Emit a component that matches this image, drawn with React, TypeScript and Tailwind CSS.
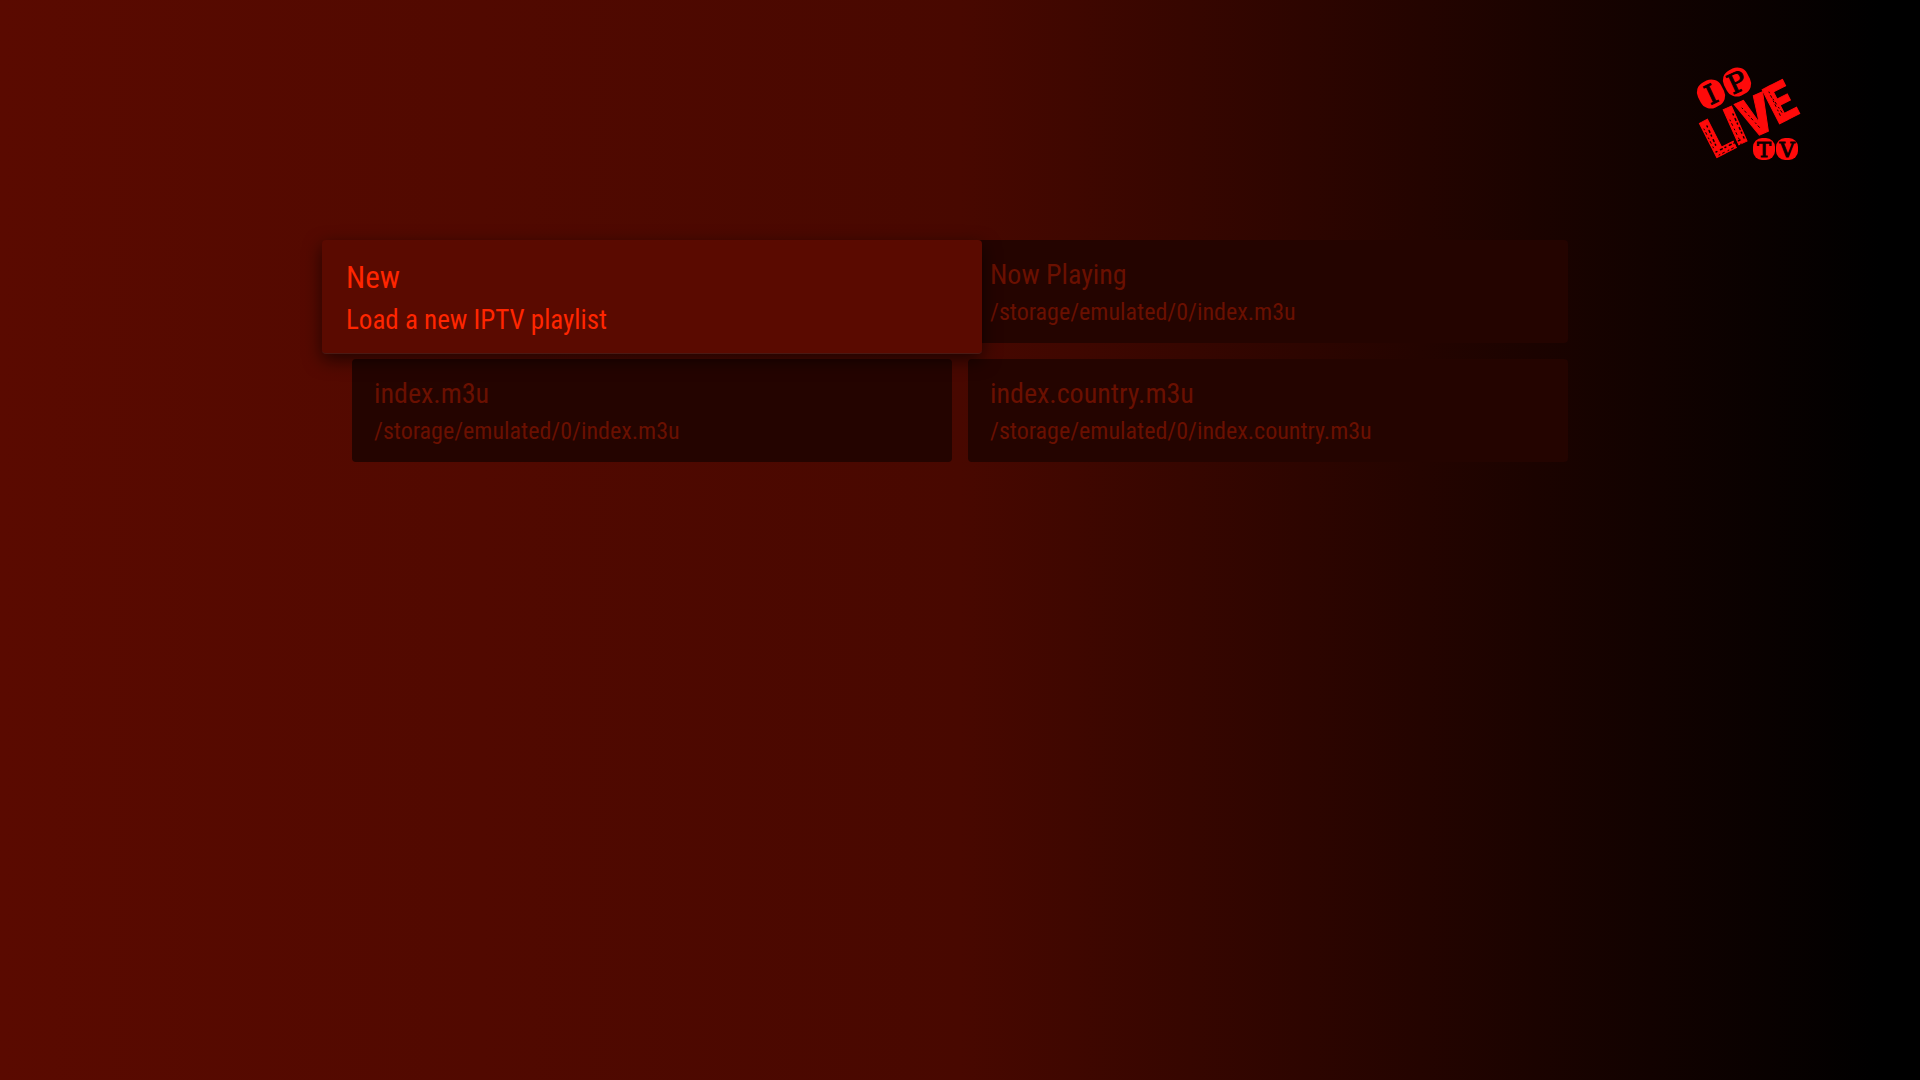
import React from "react";

type Playlist = { title: string; detail: string };

const playlists: Playlist[] = [
  { title: "Now Playing", detail: "/storage/emulated/0/index.m3u" },
  { title: "index.m3u", detail: "/storage/emulated/0/index.m3u" },
  { title: "index.country.m3u", detail: "/storage/emulated/0/index.country.m3u" },
];

function Logo() {
  const serif = "font-['DejaVu_Serif','Liberation_Serif',serif]";
  const live = "font-['Roboto_Condensed','Liberation_Sans_Narrow','Roboto',sans-serif] font-black";
  return (
    <svg role="img" aria-label="IP Live TV" viewBox="0 0 140 130" className="h-[130px] w-[140px]">
      <g fill="#ff0a0a">
        <rect x="-13" y="-14" width="26" height="28" rx="11" transform="translate(31 44) rotate(-27)" />
        <rect x="-13" y="-14" width="26" height="28" rx="11" transform="translate(57 32) rotate(-27)" />
        <rect x="73" y="88" width="22" height="22" rx="9" />
        <rect x="96" y="88" width="22" height="22" rx="9" />
        <g className={live} fontSize="54" textAnchor="middle" stroke="#ff0a0a" strokeWidth="1">
          <text transform="translate(46 103) rotate(-27)">L</text>
          <text transform="translate(63 93) rotate(-24)">I</text>
          <text transform="translate(84 83) rotate(-24)">V</text>
          <text transform="translate(109 69) rotate(-27)">E</text>
        </g>
      </g>
      <g fill="none" stroke="#0a0000" strokeLinecap="round">
        <path strokeWidth="1.5" strokeDasharray="1 4 2 3" d="M36 102L60 90M27 76L37 98M53 64L64 88" />
        <path strokeWidth="1" strokeDasharray="1 3 2 4" d="M39 105L61 94M24 79L34 99M50 70L60 91M62 58L80 78M89 42L101 67M93 49L103 64" />
      </g>
      <g fill="#0a0000" stroke="#0a0000" strokeWidth="1" textAnchor="middle" className={serif}>
        <text fontSize="27" transform="translate(35 53) rotate(-25)">I</text>
        <text fontSize="27" transform="translate(61 41) rotate(-25)">P</text>
        <text fontSize="21" x="84" y="107">T</text>
        <text fontSize="21" x="107" y="107">V</text>
      </g>
    </svg>
  );
}

export default function App() {
  return (
    <div className="flex min-h-screen flex-col bg-linear-to-r/srgb from-[#5a0a00] via-[#480800] to-black to-98% font-['Roboto_Condensed','Liberation_Sans_Narrow','Roboto',sans-serif]">
      <header className="flex h-[240px] justify-end pt-[50px] pr-[100px]">
        <Logo />
      </header>
      <main className="mx-[352px] grid grid-cols-2 items-start gap-4">
        <button className="relative z-10 -mx-[30px] -mb-3 flex h-[114px] flex-col gap-1 rounded border-b border-[#4a1a14] bg-[#5a0a00] px-6 pt-5 text-left text-[#ff2600] shadow-[0_6px_18px_rgba(0,0,0,0.6)]">
          <span className="text-[31px] leading-9">New</span>
          <span className="text-[27px] leading-10">Load a new IPTV playlist</span>
        </button>
        {playlists.map((p) => (
          <button key={p.title} className="flex h-[103px] flex-col rounded bg-[#240400] px-[22px] pt-[17px] text-left text-[#6a1000]">
            <span className="text-[28px] leading-9">{p.title}</span>
            <span className="text-[24px] leading-[38px]">{p.detail}</span>
          </button>
        ))}
      </main>
    </div>
  );
}
